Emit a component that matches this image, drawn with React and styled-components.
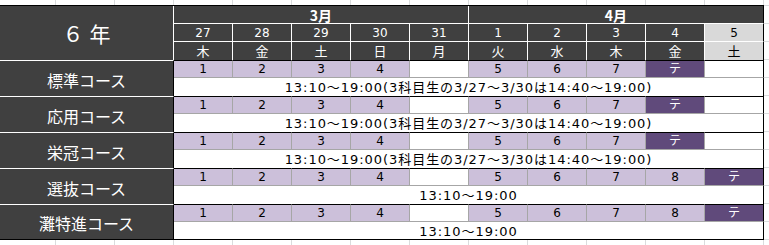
import React from "react";
import styled, { createGlobalStyle } from "styled-components";

const GlobalStyle = createGlobalStyle`
	html, body {
		margin: 0;
		padding: 0;
		background: #ffffff;
	}
	body {
		font-family: "Noto Sans CJK JP", "Liberation Sans", sans-serif;
	}
`;

const colors = {
	dark: "#404040",
	lavender: "#ccc0da",
	purple: "#604a7b",
	gray: "#d9d9d9",
	cellLine: "#a6a6a6",
	gridline: "#dadcdd",
};

const figures = `"DejaVu Sans", "Noto Sans CJK JP", sans-serif`;

const Sheet = styled.div`
	width: 769px;
	height: 245px;
	box-sizing: border-box;
	padding-top: 5px;
	overflow: hidden;
	background-color: #fff;
	background-image: linear-gradient(to right, ${colors.gridline} 1px, transparent 1px),
		linear-gradient(to bottom, ${colors.gridline} 1px, transparent 1px);
	background-size: 59px 100%, 100% 18px;
	background-position: 55px 0, 0 5px;
`;

const Table = styled.div`
	display: grid;
	grid-template-columns: 174px repeat(10, 59px);
	grid-template-rows: repeat(13, 18px);
	width: 764px;
	border-top: 1px solid #000;
`;

const Cell = styled.div`
	box-sizing: border-box;
	display: flex;
	align-items: center;
	justify-content: center;
	white-space: nowrap;
	line-height: 1;
	overflow: hidden;
`;

const YearCell = styled(Cell)`
	grid-row: span 3;
	background: ${colors.dark};
	color: #fff;
	font-size: 21px;
	letter-spacing: 6px;
	padding-top: 1px;
	padding-left: 6px;
	border-right: 1px solid #fff;
`;

const MonthCell = styled(Cell)`
	grid-column: span 5;
	background: ${colors.dark};
	color: #fff;
	font-size: 14px;
	font-weight: 700;
	border-bottom: 1px solid #fff;
	border-right: 1px solid ${(p) => (p.$last ? "#000" : "#fff")};
`;

const DayCell = styled(Cell)`
	background: ${(p) => (p.$holiday ? colors.gray : colors.dark)};
	color: ${(p) => (p.$holiday ? "#000" : "#fff")};
	font-family: ${figures};
	font-size: ${(p) => (p.$divider ? "12px" : "13px")};
	border-bottom: ${(p) => (p.$divider ? "1px solid #fff" : "none")};
	border-right: 1px solid ${(p) => (p.$last ? "#000" : "#fff")};
`;

const CourseName = styled(Cell)`
	grid-row: span 2;
	background: ${colors.dark};
	color: #fff;
	font-size: 16px;
	padding-top: 2px;
	border-top: 1px solid #fff;
	border-right: 1px solid #000;
	border-bottom: ${(p) => (p.$last ? "1px solid #000" : "none")};
`;

const numBg = {
	class: colors.lavender,
	test: colors.purple,
	none: "#fff",
};

const NumCell = styled(Cell)`
	background: ${(p) => numBg[p.$kind]};
	color: ${(p) => (p.$kind === "test" ? "#fff" : "#000")};
	font-family: ${figures};
	font-size: 12px;
	border-top: 1px solid #000;
	border-bottom: 1px solid ${colors.cellLine};
	border-right: 1px solid ${(p) => (p.$last ? "#000" : colors.cellLine)};
`;

const TimeCell = styled(Cell)`
	grid-column: span 10;
	background: #fff;
	color: #000;
	font-family: ${figures};
	font-size: 13px;
	letter-spacing: 0.95px;
	padding-top: 1px;
	border-right: 1px solid #000;
	border-bottom: ${(p) => (p.$last ? "1px solid #000" : "none")};
`;

const days = [
	{ date: "27", wd: "木" },
	{ date: "28", wd: "金" },
	{ date: "29", wd: "土" },
	{ date: "30", wd: "日" },
	{ date: "31", wd: "月" },
	{ date: "1", wd: "火" },
	{ date: "2", wd: "水" },
	{ date: "3", wd: "木" },
	{ date: "4", wd: "金" },
	{ date: "5", wd: "土", holiday: true },
];

const longTime = "13:10～19:00(3科目生の3/27～3/30は14:40～19:00)";
const shortTime = "13:10～19:00";

const weekA = ["1", "2", "3", "4", "", "5", "6", "7", "テ", ""];
const weekB = ["1", "2", "3", "4", "", "5", "6", "7", "8", "テ"];

const courses = [
	{ name: "標準コース", slots: weekA, time: longTime },
	{ name: "応用コース", slots: weekA, time: longTime },
	{ name: "栄冠コース", slots: weekA, time: longTime },
	{ name: "選抜コース", slots: weekB, time: shortTime },
	{ name: "灘特進コース", slots: weekB, time: shortTime },
];

const kindOf = (v) => (v === "" ? "none" : v === "テ" ? "test" : "class");

export default function App() {
	return (
		<>
			<GlobalStyle />
			<Sheet>
				<Table>
					<YearCell>６年</YearCell>
					<MonthCell>3月</MonthCell>
					<MonthCell $last>4月</MonthCell>
					{days.map((d, i) => (
						<DayCell
							key={`d${i}`}
							$divider
							$holiday={d.holiday}
							$last={i === days.length - 1}
						>
							{d.date}
						</DayCell>
					))}
					{days.map((d, i) => (
						<DayCell key={`w${i}`} $holiday={d.holiday} $last={i === days.length - 1}>
							{d.wd}
						</DayCell>
					))}
					{courses.map((c, ci) => {
						const last = ci === courses.length - 1;
						return (
							<React.Fragment key={c.name}>
								<CourseName $last={last}>{c.name}</CourseName>
								{c.slots.map((s, i) => (
									<NumCell key={i} $kind={kindOf(s)} $last={i === c.slots.length - 1}>
										{s}
									</NumCell>
								))}
								<TimeCell $last={last}>{c.time}</TimeCell>
							</React.Fragment>
						);
					})}
				</Table>
			</Sheet>
		</>
	);
}
